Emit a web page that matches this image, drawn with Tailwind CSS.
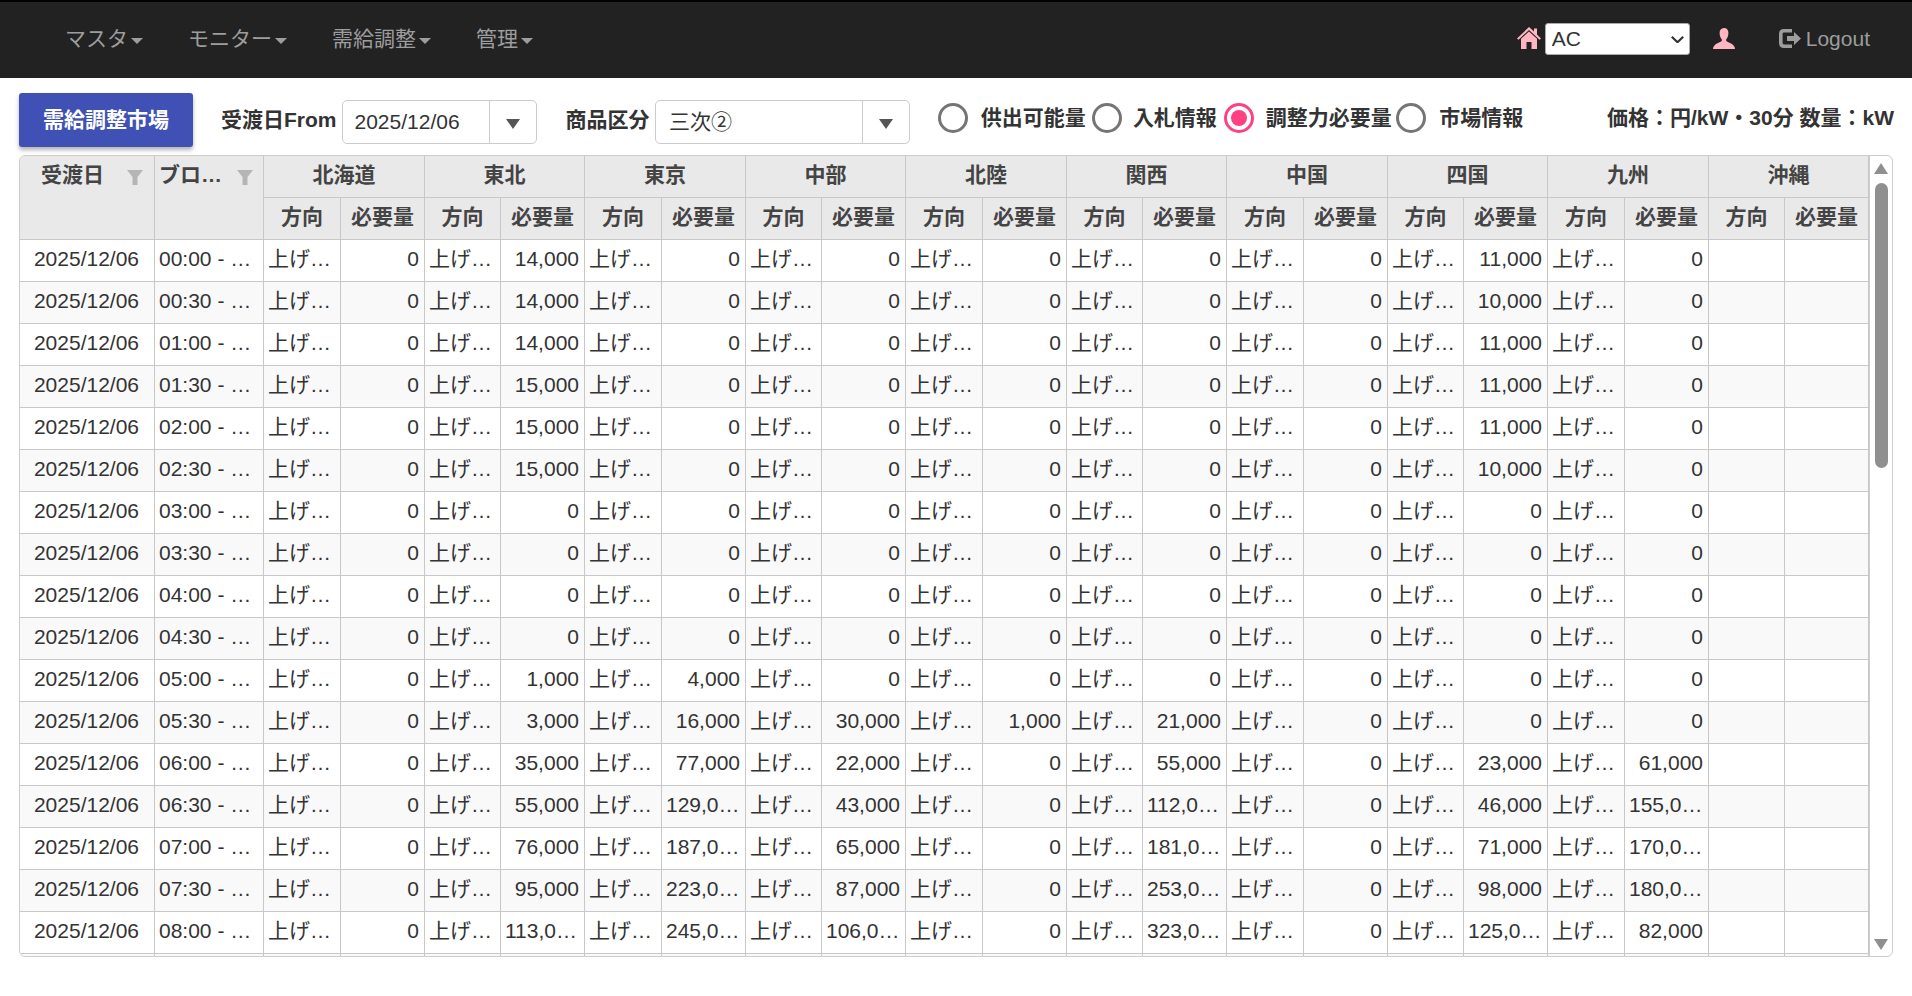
<!DOCTYPE html>
<html lang="ja">

<head>
    <meta charset="UTF-8">
    <title>需給調整市場</title>
    <script src="https://cdn.jsdelivr.net/npm/@tailwindcss/browser@4"></script>
</head>

<body class="h-[996px] overflow-hidden bg-white text-[21px] leading-[24px] text-[#333] font-['Liberation_Sans','Noto_Sans_CJK_JP',sans-serif]">
    <!-- Navbar -->
    <nav class="flex h-[78px] items-center border-t-2 border-black bg-[#222] pl-[42.5px] pr-[42px] text-[#9d9d9d]">
        <a class="flex items-center px-[22.5px] pb-[2px]">マスタ<span class="ml-[3px] mt-[3px] border-x-[6px] border-t-[6px] border-x-transparent border-t-[#9d9d9d]"></span></a>
        <a class="flex items-center px-[22.5px] pb-[2px]">モニター<span class="ml-[3px] mt-[3px] border-x-[6px] border-t-[6px] border-x-transparent border-t-[#9d9d9d]"></span></a>
        <a class="flex items-center px-[22.5px] pb-[2px]">需給調整<span class="ml-[3px] mt-[3px] border-x-[6px] border-t-[6px] border-x-transparent border-t-[#9d9d9d]"></span></a>
        <a class="flex items-center px-[22.5px] pb-[2px]">管理<span class="ml-[3px] mt-[3px] border-x-[6px] border-t-[6px] border-x-transparent border-t-[#9d9d9d]"></span></a>

        <div class="ml-auto flex items-center pb-[3px]">
            <svg class="mb-[2px] h-[22px] w-[24px] fill-[#ffb6c1]" viewBox="0 0 24 22">
                <path d="M12 0l5 4.600V1.500h3v5.900L24 11.500l-1.500 1.300L12 3 1.500 12.800 0 11.500z" />
                <path d="M12 4.500l8 7.300V22h-5.500v-7h-5v7H4V11.800z" />
            </svg>
            <div class="relative ml-[4px] h-[32px] w-[145px]">
                <select class="h-full w-full appearance-none rounded-[3px] border border-[#aaa] bg-white pl-[6px] text-[21px] text-[#333]">
                    <option>AC</option>
                </select>
                <svg class="pointer-events-none absolute right-[6px] top-[13px] h-[7px] w-[13px] fill-none stroke-[#333] stroke-[2.2]" viewBox="0 0 13 7">
                    <path d="M.8.8l5.700 5.400L12.200.8" />
                </svg>
            </div>
            <svg class="ml-[23px] h-[21px] w-[22px] fill-[#ffb6c1]" viewBox="0 0 22 21">
                <path d="M11 0c3 0 4.400 2.200 4.400 5 0 2.600-1 5-2.200 6.300v1.500c0 1 3.800 1.800 6.400 3.700C21 17.600 21.800 19 22 21H0c.2-2 1-3.400 2.400-4.500 2.600-1.900 6.400-2.700 6.400-3.700v-1.500C7.600 10 6.600 7.600 6.600 5 6.600 2.200 8 0 11 0z" />
            </svg>
            <svg class="ml-[44px] h-[19px] w-[22px]" viewBox="0 0 22 19">
                <path class="fill-none stroke-[#9d9d9d] stroke-[3.6]" d="M13 1.800H5Q1.800 1.800 1.800 5v9q0 3.200 3.200 3.200h8" />
                <path class="fill-[#9d9d9d]" d="M15 3l7 6.500-7 6.500v-4H8V7h7z" />
            </svg>
            <span class="ml-[5px]">Logout</span>
        </div>
    </nav>

    <!-- Toolbar -->
    <div class="mt-[15px] flex h-[54px] items-center pl-[19px] pr-[18px]">
        <button class="h-[54px] w-[174px] rounded-[3px] bg-[#3f51b5] font-bold text-white shadow-[0_3px_4px_rgba(0,0,0,0.3)]">需給調整市場</button>

        <label class="ml-[28px] font-bold">受渡日From</label>
        <div class="ml-[5px] mt-[4px] flex h-[44px] w-[195px] items-center rounded-[5px] border border-[#ccc] pl-[12px]">
            <span class="flex-1">2025/12/06</span>
            <span class="flex h-full w-[47px] items-center justify-center border-l border-[#ccc]">
                <span class="mt-[3px] border-x-[7.5px] border-t-[10px] border-x-transparent border-t-[#555]"></span>
            </span>
        </div>

        <label class="ml-[29px] font-bold">商品区分</label>
        <div class="ml-[5.5px] mt-[4px] flex h-[44px] w-[255px] items-center rounded-[5px] border border-[#ccc] pl-[13px]">
            <span class="flex-1">三次②</span>
            <span class="flex h-full w-[47px] items-center justify-center border-l border-[#ccc]">
                <span class="mt-[3px] border-x-[7.5px] border-t-[10px] border-x-transparent border-t-[#555]"></span>
            </span>
        </div>

        <div class="mb-[4px] ml-[28.3px] flex items-center font-bold">
            <span class="h-[30px] w-[30px] rounded-full border-[3px] border-[#757575]"></span>
            <span class="ml-[12.500px] mr-[6.400px]">供出可能量</span>
            <span class="h-[30px] w-[30px] rounded-full border-[3px] border-[#757575]"></span>
            <span class="ml-[10.700px] mr-[6.800px]">入札情報</span>
            <span class="flex h-[30px] w-[30px] items-center justify-center rounded-full border-[3px] border-[#ff4081]">
                <span class="h-[16px] w-[16px] rounded-full bg-[#ff4081]"></span>
            </span>
            <span class="ml-[12px] mr-[4.600px]">調整力必要量</span>
            <span class="h-[30px] w-[30px] rounded-full border-[3px] border-[#757575]"></span>
            <span class="ml-[13px]">市場情報</span>
        </div>

        <div class="mb-[4px] ml-auto font-bold">価格：円/kW・30分 数量：kW</div>
    </div>

    <!-- Grid -->
    <div class="ml-[19px] mt-[8px] flex h-[802px] w-[1874px] overflow-hidden rounded-[6px] border border-[#ccc]">
        <table class="h-fit w-[1849px] table-fixed border-separate border-spacing-0">
            <colgroup id="cols"></colgroup>
            <thead id="head" class="bg-[#e9e9e9] font-bold text-[#444]"></thead>
            <tbody id="body"></tbody>
        </table>
        <!-- Scrollbar -->
        <div class="relative w-[24px] border-l border-[#ccc]">
            <span class="absolute left-[4px] top-[7px] border-x-[7.500px] border-b-[11px] border-x-transparent border-b-[#8f8f8f]"></span>
            <span class="absolute left-[5px] top-[27px] h-[285px] w-[13px] rounded-full bg-[#8f8f8f]"></span>
            <span class="absolute bottom-[6px] left-[4px] border-x-[7.500px] border-t-[11px] border-x-transparent border-t-[#8f8f8f]"></span>
        </div>
    </div>

    <script>
        const regions = ['北海道', '東北', '東京', '中部', '北陸', '関西', '中国', '四国', '九州', '沖縄'];
        const widths = [135, 109, 77, 84, 76, 84, 77, 84, 76, 84, 77, 84, 76, 84, 77, 84, 76, 84, 77, 84, 76, 84];

        const zeros = Array(17).fill(0);
        const data = {
            '東北': [14000, 14000, 14000, 15000, 15000, 15000, 0, 0, 0, 0, 1000, 3000, 35000, 55000, 76000, 95000, 113000],
            '東京': [0, 0, 0, 0, 0, 0, 0, 0, 0, 0, 4000, 16000, 77000, 129000, 187000, 223000, 245000],
            '中部': [0, 0, 0, 0, 0, 0, 0, 0, 0, 0, 0, 30000, 22000, 43000, 65000, 87000, 106000],
            '北陸': [0, 0, 0, 0, 0, 0, 0, 0, 0, 0, 0, 1000, 0, 0, 0, 0, 0],
            '関西': [0, 0, 0, 0, 0, 0, 0, 0, 0, 0, 0, 21000, 55000, 112000, 181000, 253000, 323000],
            '四国': [11000, 10000, 11000, 11000, 11000, 10000, 0, 0, 0, 0, 0, 0, 23000, 46000, 71000, 98000, 125000],
            '九州': [0, 0, 0, 0, 0, 0, 0, 0, 0, 0, 0, 0, 61000, 155000, 170000, 180000, 82000],
        };

        const funnel = '<svg class="mt-[4px] h-[15px] w-[16px] shrink-0 fill-[#b5b5b5]" viewBox="0 0 16 15"><path d="M0 0h16l-5.500 7v8h-5V7z"/></svg>';

        document.getElementById('cols').innerHTML = widths.map(w => `<col style="width:${w}px">`).join('');

        // header rows
        let head = `<tr>
            <th rowspan="2" class="border-b border-r border-[#c8c8c8] p-0 align-top">
                <div class="flex h-[38px] items-center justify-between pl-[21px] pr-[11px]"><span>受渡日</span>${funnel}</div>
            </th>
            <th rowspan="2" class="border-b border-r border-[#c8c8c8] p-0 align-top">
                <div class="flex h-[38px] items-center justify-between gap-[4px] pl-[4px] pr-[10px]"><span class="truncate">ブロック</span>${funnel}</div>
            </th>`;
        regions.forEach(r => {
            head += `<th colspan="2" class="h-[42px] border-b border-r border-[#c8c8c8] p-0 pb-[4px] text-center">${r}</th>`;
        });
        head += '</tr><tr>';
        regions.forEach(() => {
            head += `<th class="h-[42px] border-b border-r border-[#c8c8c8] p-0 pb-[4px] text-center">方向</th>
                <th class="h-[42px] border-b border-r border-[#c8c8c8] p-0 pb-[4px] text-center">必要量</th>`;
        });
        document.getElementById('head').innerHTML = head + '</tr>';

        // body rows, half hour blocks from 00:00
        const pad = n => String(n).padStart(2, '0');
        const slot = i => `${pad(Math.floor(i / 2))}:${i % 2 ? '30' : '00'}`;
        let body = '';
        for (let i = 0; i < 18; i++) {
            const blank = i === 17;
            body += `<tr class="${i % 2 ? 'bg-[#f9f9f9]' : 'bg-white'}">
                <td class="h-[42px] border-b border-r border-[#c8c8c8] p-0 pb-[3px] pr-[1px] text-center">${blank ? '' : '2025/12/06'}</td>
                <td class="h-[42px] truncate border-b border-r border-[#c8c8c8] pb-[3px] pl-[4px] pr-[5px]">${blank ? '' : `${slot(i)} - ${slot(i + 1)}`}</td>`;
            regions.forEach(r => {
                const okinawa = r === '沖縄';
                const values = data[r] || zeros;
                const show = !okinawa && !blank;
                body += `<td class="h-[42px] truncate border-b border-r border-[#c8c8c8] pb-[3px] pl-[4px] pr-[5px]">${show ? '上げ調整力' : ''}</td>
                    <td class="h-[42px] truncate border-b border-r border-[#c8c8c8] pb-[3px] pl-[4px] pr-[5px] text-right">${show ? values[i].toLocaleString('en-US') : ''}</td>`;
            });
            body += '</tr>';
        }
        document.getElementById('body').innerHTML = body;
    </script>
</body>

</html>
